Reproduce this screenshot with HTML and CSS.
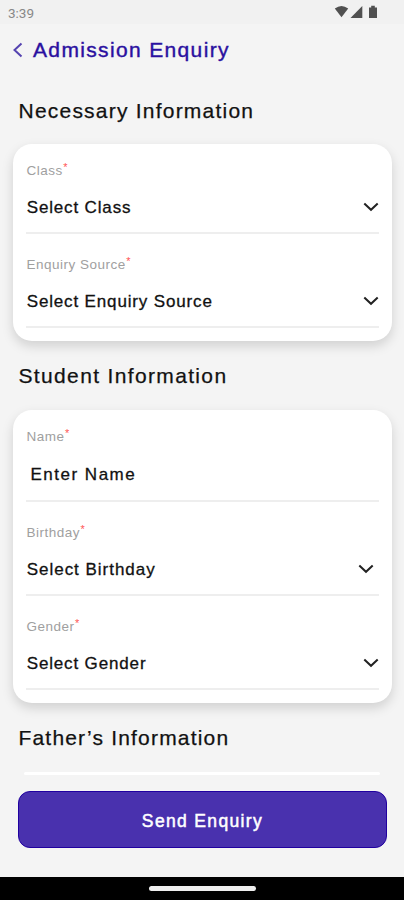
FILE: index.html
```html
<!DOCTYPE html>
<html lang="en">
<head>
    <meta charset="UTF-8">
    <meta name="viewport" content="width=device-width, initial-scale=1.0">
    <title>Admission Enquiry</title>
    <link rel="stylesheet" href="styles.css">
</head>
<body>
    <div class="status-bar">
        <span class="time">3:39</span>
        <svg class="status-icons" width="46" height="14" viewBox="0 0 46 14">
            <path d="M0.8 3.6Q7.5 -1.8 14.2 3.6L7.5 12.2Z"/>
            <path d="M28.3 1V13H16.5Z"/>
            <path d="M35 2.4H37.2V0.8H40.8V2.4H43V13H35Z"/>
        </svg>
    </div>
    <header class="header">
        <svg class="back" width="10" height="16" viewBox="0 0 10 16">
            <path d="M8.5 1.5L1.5 8L8.5 14.5"/>
        </svg>
        <h1>Admission Enquiry</h1>
    </header>

    <main>
        <h2>Necessary Information</h2>
        <section class="card">
            <div class="field first">
                <label>Class<sup>*</sup></label>
                <div class="value"><span>Select Class</span><svg class="arrow" width="16" height="10" viewBox="0 0 16 10"><path d="M1.3 1.5L8 7.8L14.7 1.5"/></svg></div>
            </div>
            <div class="field">
                <label>Enquiry Source<sup>*</sup></label>
                <div class="value"><span>Select Enquiry Source</span><svg class="arrow" width="16" height="10" viewBox="0 0 16 10"><path d="M1.3 1.5L8 7.8L14.7 1.5"/></svg></div>
            </div>
        </section>

        <h2 class="student">Student Information</h2>
        <section class="card">
            <div class="field name">
                <label>Name<sup>*</sup></label>
                <div class="value"><span>Enter Name</span></div>
            </div>
            <div class="field birthday">
                <label>Birthday<sup>*</sup></label>
                <div class="value"><span>Select Birthday</span><svg class="arrow" width="16" height="10" viewBox="0 0 16 10"><path d="M1.3 1.5L8 7.8L14.7 1.5"/></svg></div>
            </div>
            <div class="field">
                <label>Gender<sup>*</sup></label>
                <div class="value"><span>Select Gender</span><svg class="arrow" width="16" height="10" viewBox="0 0 16 10"><path d="M1.3 1.5L8 7.8L14.7 1.5"/></svg></div>
            </div>
        </section>

        <h2>Father’s Information</h2>
        <div class="next-card"></div>
    </main>

    <footer>
        <button type="button">Send Enquiry</button>
    </footer>
    <div class="nav-bar"><div class="handle"></div></div>
</body>
</html>
```
FILE: styles.css
```css
* {
    box-sizing: border-box;
}
body {
    margin: 0;
    height: 900px;
    display: flex;
    flex-direction: column;
    overflow: hidden;
    background-color: #f4f4f4;
    color: #111;
    font-family: "Liberation Sans", Arial, sans-serif;
}
.status-bar {
    display: flex;
    justify-content: space-between;
    height: 24px;
    padding: 5px 24px 0 8px;
    background-color: #f1f1f1;
}
.time {
    font: 13.5px/16px Roboto, sans-serif;
    color: #888;
}
.status-icons {
    fill: #505050;
}
.header {
    display: flex;
    align-items: center;
    height: 52px;
    padding-left: 13px;
}
.back {
    margin-right: 10px;
    fill: none;
    stroke: #5543b0;
    stroke-width: 2;
}
h1 {
    margin: 0;
    padding-bottom: 1px;
    font-size: 21px;
    font-weight: normal;
    letter-spacing: 1.35px;
    color: #2a10a0;
    -webkit-text-stroke: 0.4px #2a10a0;
}
h2 {
    margin: 0;
    height: 69px;
    padding-left: 18.5px;
    font-size: 21px;
    font-weight: normal;
    line-height: 69px;
    letter-spacing: 1.18px;
    -webkit-text-stroke: 0.25px #111;
}
h2:first-child {
    height: 68px;
    letter-spacing: 1.22px;
}
.student {
    letter-spacing: 1.35px;
}
.card {
    margin: 0 12px 0 13px;
    padding: 0 13px 13px;
    background-color: #fff;
    border-radius: 19px;
    box-shadow: 0 5px 12px rgba(0, 0, 0, 0.15);
}
.field {
    display: flex;
    flex-direction: column;
    justify-content: flex-end;
    height: 94px;
    border-bottom: 2px solid #eee;
}
.first {
    height: 90px;
}
label {
    padding-left: 0.5px;
    font-size: 13.5px;
    line-height: 16px;
    letter-spacing: 0.5px;
    color: #a0a0a0;
}
sup {
    margin-left: 0.5px;
    font-size: 11px;
    line-height: 0;
    vertical-align: 4px;
    color: #f55;
}
.value {
    display: flex;
    justify-content: space-between;
    margin: 19px 0 14px;
    padding-left: 0.7px;
    font-size: 17px;
    line-height: 20px;
    letter-spacing: 0.85px;
    -webkit-text-stroke: 0.3px #111;
}
.arrow {
    margin-top: 4px;
    fill: none;
    stroke: #222;
    stroke-width: 2;
}
.name {
    height: 92px;
}
.name .value {
    margin: 20px 0 15px;
    padding-left: 4.5px;
    letter-spacing: 1.5px;
}
.birthday .value {
    letter-spacing: 0.98px;
}
.birthday .arrow {
    margin-right: 5px;
}
.next-card {
    height: 3px;
    margin: 0 24px;
    background-color: #fff;
    border-radius: 3px;
}
footer {
    margin-top: auto;
    padding: 0 17px 29px 18px;
}
button {
    display: block;
    width: 100%;
    height: 57px;
    padding: 3px 0 0;
    border: 1px solid #2000a0;
    border-radius: 12px;
    background-color: #4931ae;
    color: #fff;
    font-family: inherit;
    font-size: 17.5px;
    letter-spacing: 1.35px;
    -webkit-text-stroke: 0.5px #fff;
}
.nav-bar {
    height: 23px;
    padding-top: 9px;
    background-color: #000;
}
.handle {
    width: 107px;
    height: 5px;
    margin: 0 auto;
    background-color: #eee;
    border-radius: 3px;
}
```
